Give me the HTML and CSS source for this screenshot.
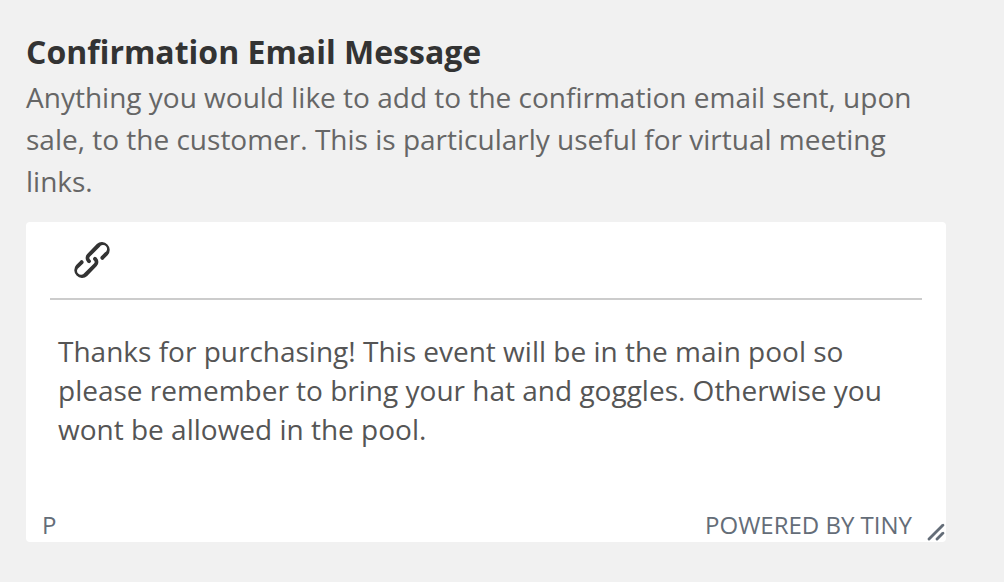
FILE: index.html
```html
<!DOCTYPE html>
<html lang="en">
<head>
    <meta charset="UTF-8">
    <meta name="viewport" content="width=device-width, initial-scale=1.0">
    <title>Confirmation Email Message</title>
    <link rel="stylesheet" href="styles.css">
</head>
<body>
    <div class="field">
        <label class="field-label" for="message">Confirmation Email Message</label>
        <p class="field-help" id="message-help">Anything you would like to add to the confirmation email sent, upon sale, to the customer. This is particularly useful for virtual meeting links.</p>

        <div class="editor">
            <div class="toolbar">
                <button type="button" class="tool-button" aria-label="Insert link">
                    <svg width="48" height="48" viewBox="0 0 24 24" fill="currentColor">
                        <path d="M6.2 12.3a1 1 0 0 1 1.4 1.4l-2.1 2a2 2 0 1 0 2.7 2.8l4.8-4.8a1 1 0 0 0 0-1.4 1 1 0 1 1 1.4-1.3 2.9 2.9 0 0 1 0 4L9.6 20a3.9 3.9 0 0 1-5.5-5.5l2-2zm11.6-.6a1 1 0 0 1-1.4-1.4l2-2a2 2 0 1 0-2.6-2.8L11 10.3a1 1 0 0 0 0 1.4A1 1 0 1 1 9.6 13a2.9 2.9 0 0 1 0-4L14.4 4a3.9 3.9 0 0 1 5.5 5.5l-2 2z"/>
                    </svg>
                </button>
            </div>
            <textarea class="message" id="message" rows="3" aria-describedby="message-help">Thanks for purchasing! This event will be in the main pool so please remember to bring your hat and goggles. Otherwise you wont be allowed in the pool.</textarea>
            <div class="statusbar">
                <span class="path">P</span>
                <a class="branding" href="#">POWERED BY TINY</a>
                <svg class="resize" width="20" height="20" viewBox="0 0 10 10" fill="currentColor">
                    <path d="M8.1 1.1A.5.5 0 1 1 9 2l-7 7A.5.5 0 1 1 1 8l7-7zM8.1 5.1A.5.5 0 1 1 9 6l-3 3A.5.5 0 1 1 5 8l3-3z"/>
                </svg>
            </div>
        </div>
    </div>
</body>
</html>
```
FILE: styles.css
```css
* {
    box-sizing: border-box;
    margin: 0;
    padding: 0;
}

body {
    background-color: #f1f1f1;
    font-family: 'Open Sans', sans-serif;
    color: #555;
}

.field {
    padding: 30px 58px 40px 26px;
}

.field-label {
    display: block;
    margin-bottom: 2px;
    color: #333;
    font-size: 32px;
    line-height: 44px;
    font-weight: bold;
}

.field-help {
    margin-bottom: 20px;
    color: #666;
    font-size: 28px;
    line-height: 42px;
}

.editor {
    background-color: #fff;
    border-radius: 4px;
}

.toolbar {
    display: flex;
    margin: 0 24px;
    padding: 0 18px;
    height: 78px;
    align-items: center;
    border-bottom: 2px solid #ccc;
}

.tool-button {
    display: flex;
    border: none;
    background: none;
    color: #333;
    cursor: pointer;
}

.message {
    display: block;
    width: 100%;
    height: 206px;
    padding: 32px;
    border: none;
    outline: none;
    resize: none;
    background: none;
    color: #555;
    font-family: inherit;
    font-size: 28px;
    line-height: 39px;
}

.statusbar {
    display: flex;
    align-items: center;
    height: 36px;
    padding-left: 16px;
    color: #646d78;
    font-size: 24px;
}

.branding {
    margin-left: auto;
    color: inherit;
    text-decoration: none;
}

.resize {
    align-self: flex-end;
    margin-left: 14px;
}
```
